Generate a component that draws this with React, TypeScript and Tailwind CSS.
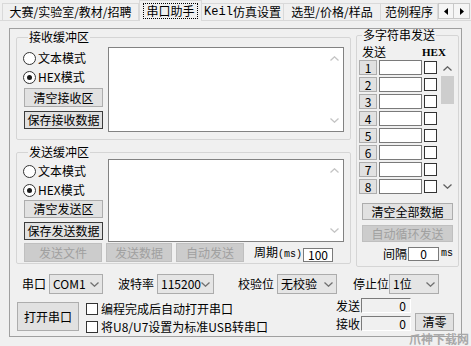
import React from "react";

const font = "font-['Noto_Sans_CJK_SC','Noto_Sans',sans-serif]";

function Chevron({ up = false, className = "" }: { up?: boolean; className?: string }) {
  return (
    <svg width="9" height="5" viewBox="0 0 9 5" className={className}>
      <path
        d={up ? "M0.5 4.5 L4.5 0.8 L8.5 4.5" : "M0.5 0.5 L4.5 4.2 L8.5 0.5"}
        fill="none"
        stroke="currentColor"
        strokeWidth="1.3"
      />
    </svg>
  );
}

function Btn({
  className = "",
  children,
  tone = "normal",
}: {
  className?: string;
  children: React.ReactNode;
  tone?: "normal" | "focus" | "disabled";
}) {
  const look =
    tone === "disabled"
      ? "bg-[#cccccc] border-[#bfbfbf] text-[#a0a0a0]"
      : tone === "focus"
        ? "bg-[#e1e1e1] border-[#3c3c3c] text-black"
        : "bg-[#e1e1e1] border-[#adadad] text-black";
  return (
    <button
      type="button"
      className={`flex shrink-0 items-center justify-center border text-[12px] leading-[14px] ${look} ${className}`}
    >
      {children}
    </button>
  );
}

function Radio({ label, checked = false, className = "" }: { label: string; checked?: boolean; className?: string }) {
  return (
    <div className={`flex h-[14px] items-center ${className}`}>
      <span className="flex h-[13px] w-[13px] items-center justify-center rounded-full border border-[#333333] bg-white">
        {checked && <span className="h-[5px] w-[5px] rounded-full bg-[#1a1a1a]" />}
      </span>
      <span className="ml-[2px] leading-[14px]">{label}</span>
    </div>
  );
}

function Check({ label, className = "" }: { label: string; className?: string }) {
  return (
    <div className={`flex h-[14px] items-center ${className}`}>
      <span className="h-[12px] w-[12px] border border-[#333333] bg-white" />
      <span className="ml-[3px] leading-[14px]">{label}</span>
    </div>
  );
}

function TextBox({ className = "" }: { className?: string }) {
  return (
    <div className={`flex justify-end border border-[#828282] bg-white ${className}`}>
      <div className="flex w-[17px] flex-col items-center justify-between py-[8px] text-[#c4c4c4]">
        <Chevron up />
        <Chevron />
      </div>
    </div>
  );
}

function Sel({ value, className = "" }: { value: string; className?: string }) {
  return (
    <div
      className={`flex h-[20px] items-center justify-between border border-[#acacac] bg-[#e5e5e5] pl-[3px] pr-[3px] ${className}`}
    >
      <span className="leading-[14px]">{value}</span>
      <Chevron className="text-[#707070]" />
    </div>
  );
}

function Counter({ label, className = "" }: { label: string; className?: string }) {
  return (
    <div className={`flex h-[15px] items-center ${className}`}>
      <span className="w-[24px] leading-[14px]">{label}</span>
      <div className="ml-[1px] flex h-[15px] w-[50px] items-center justify-end border-l border-t border-b border-r border-l-[#7a7a7a] border-t-[#7a7a7a] border-b-white border-r-white bg-[#f0f0f0] pr-[4px] leading-[13px]">
        0
      </div>
    </div>
  );
}

export default function App() {
  const rows = [1, 2, 3, 4, 5, 6, 7, 8];

  return (
    <div className={`relative h-[346px] w-[471px] overflow-hidden bg-[#f0f0f0] text-[12px] text-black ${font}`}>
      {/* tab strip */}
      <div className="flex h-[20px] items-end">
        <div className="ml-[2px] flex h-[17px] w-[137px] items-center justify-center border border-b-0 border-[#d9d9d9] leading-[14px]">
          大赛/实验室/教材/招聘
        </div>
        <div className="relative z-10 -mb-px flex h-[21px] w-[63px] items-start justify-center border border-b-0 border-[#d9d9d9] bg-[#f0f0f0] pt-[2px]">
          <span className="border border-dotted border-black px-[2px] leading-[14px]">串口助手</span>
        </div>
        <div className="flex h-[17px] w-[82px] items-center justify-center border border-b-0 border-l-0 border-[#d9d9d9] leading-[14px]">
          <span className="font-['Liberation_Mono',monospace]">Keil</span>仿真设置
        </div>
        <div className="flex h-[17px] w-[97px] items-center justify-center border border-b-0 border-l-0 border-[#d9d9d9] leading-[14px]">
          选型/价格/样品
        </div>
        <div className="flex h-[17px] w-[57px] items-center justify-center border border-b-0 border-l-0 border-[#d9d9d9] leading-[14px]">
          范例程序
        </div>
        <div className="mb-[1px] flex h-[16px]">
          <div className="flex w-[16px] items-center justify-center border border-[#c8c8c8] bg-[#f5f5f5]">
            <svg width="4" height="7" viewBox="0 0 4 7">
              <path d="M4 0 L0 3.5 L4 7 Z" fill="#000" />
            </svg>
          </div>
          <div className="flex w-[16px] items-center justify-center border border-l-0 border-[#c8c8c8] bg-[#f5f5f5]">
            <svg width="4" height="7" viewBox="0 0 4 7">
              <path d="M0 0 L4 3.5 L0 7 Z" fill="#000" />
            </svg>
          </div>
        </div>
      </div>

      {/* tab page */}
      <div className="h-[326px] border-t border-[#d9d9d9] pl-[9px] pt-[7px]">
        <div className="flex h-[309px] w-[453px] flex-col border border-[#a0a0a0]">
          {/* upper area */}
          <div className="flex items-start">
            <div className="ml-[6px] flex w-[335px] flex-col">
              {/* receive buffer */}
              <fieldset className="mt-[2px] h-[109px] w-[335px] rounded-[2px] border border-[#d5d5d5] pl-[6px] pr-[6px]">
                <legend className="ml-[5px] px-[1px] leading-[12px]">接收缓冲区</legend>
                <div className="flex">
                  <div className="flex w-[80px] flex-col">
                    <Radio label="文本模式" className="mt-[8px]" />
                    <Radio label="HEX模式" checked className="mt-[5px]" />
                    <Btn className="ml-[1px] mt-[4px] h-[19px] w-[79px]">清空接收区</Btn>
                    <Btn tone="focus" className="ml-[1px] mt-[4px] h-[18px] w-[79px]">
                      保存接收数据
                    </Btn>
                  </div>
                  <TextBox className="ml-[5px] mt-[4px] h-[85px] w-[236px]" />
                </div>
              </fieldset>

              {/* send buffer */}
              <fieldset className="mt-[6px] h-[118px] w-[335px] rounded-[2px] border border-[#d5d5d5] pl-[6px] pr-[6px]">
                <legend className="ml-[5px] px-[1px] leading-[12px]">发送缓冲区</legend>
                <div className="flex items-start">
                  <div className="flex w-[80px] flex-col">
                    <Radio label="文本模式" className="mt-[6px]" />
                    <Radio label="HEX模式" checked className="mt-[5px]" />
                    <Btn className="ml-[1px] mt-[3px] h-[18px] w-[79px]">清空发送区</Btn>
                    <Btn tone="focus" className="ml-[1px] mt-[4px] h-[18px] w-[79px]">
                      保存发送数据
                    </Btn>
                  </div>
                  <TextBox className="ml-[5px] mt-[1px] h-[83px] w-[236px]" />
                </div>
                <div className="mt-[1px] flex items-end">
                  <Btn tone="disabled" className="ml-[1px] h-[19px] w-[78px]">
                    发送文件
                  </Btn>
                  <Btn tone="disabled" className="ml-[4px] h-[19px] w-[66px]">
                    发送数据
                  </Btn>
                  <Btn tone="disabled" className="ml-[4px] h-[19px] w-[68px]">
                    自动发送
                  </Btn>
                  <span className="ml-[10px] whitespace-nowrap leading-[14px]">
                    周期<span className="font-['Liberation_Mono',monospace] text-[10px]">(ms)</span>
                  </span>
                  <div className="ml-[1px] flex h-[14px] w-[30px] items-center border border-[#7a7a7a] bg-white pl-[4px] leading-[12px]">
                    100
                  </div>
                </div>
              </fieldset>
            </div>

            {/* multi string send */}
            <fieldset className="ml-[5px] h-[238px] w-[103px] rounded-[2px] border border-[#d5d5d5]">
              <legend className="ml-[5px] px-[1px] leading-[12px]">多字符串发送</legend>
              <div className="mt-[5px] flex h-[12px] items-center">
                <span className="ml-[5px] leading-[12px]">发送</span>
                <span className="ml-[36px] font-['Liberation_Serif',serif] text-[11px] font-bold leading-[12px]">HEX</span>
              </div>
              <div className="mt-[2px] flex items-start">
                <div className="ml-[2px] flex flex-col gap-[2px]">
                  {rows.map((n) => (
                    <div key={n} className="flex h-[15px] items-center">
                      <Btn className="h-[15px] w-[18px]">{n}</Btn>
                      <div className="ml-[2px] h-[15px] w-[43px] border border-[#7a7a7a] bg-white" />
                      <div className="ml-[2px] h-[13px] w-[13px] border border-[#333333] bg-white" />
                    </div>
                  ))}
                </div>
                <div className="ml-[3px] flex h-[134px] w-[14px] flex-col items-center bg-[#f0f0f0] text-[#606060]">
                  <div className="flex h-[16px] items-center">
                    <Chevron up />
                  </div>
                  <div className="h-[28px] w-[13px] bg-[#cdcdcd]" />
                  <div className="flex-1" />
                  <div className="flex h-[16px] items-center">
                    <Chevron />
                  </div>
                </div>
              </div>
              <Btn className="ml-[5px] mt-[9px] h-[17px] w-[91px]">清空全部数据</Btn>
              <Btn tone="disabled" className="ml-[5px] mt-[5px] h-[17px] w-[91px]">
                自动循环发送
              </Btn>
              <div className="mt-[5px] flex h-[14px] items-center">
                <span className="ml-[26px] leading-[14px]">间隔</span>
                <div className="ml-[1px] flex h-[14px] w-[31px] items-center justify-center border border-[#7a7a7a] bg-white leading-[12px]">
                  0
                </div>
                <span className="ml-[2px] font-['Liberation_Mono',monospace] text-[10px] leading-[12px]">ms</span>
              </div>
            </fieldset>
          </div>

          {/* port settings */}
          <div className="mt-[7px] flex h-[20px] items-center">
            <span className="ml-[12px] leading-[14px]">串口</span>
            <Sel value="COM1" className="ml-[3px] w-[54px]" />
            <span className="ml-[15px] leading-[14px]">波特率</span>
            <Sel value="115200" className="ml-[3px] w-[57px]" />
            <span className="ml-[24px] leading-[14px]">校验位</span>
            <Sel value="无校验" className="ml-[3px] w-[60px]" />
            <span className="ml-[16px] leading-[14px]">停止位</span>
            <Sel value="1位" className="w-[50px]" />
          </div>

          <div className="mt-[4px] flex items-start">
            <Btn className="ml-[7px] mt-[4px] h-[29px] w-[62px]">打开串口</Btn>
            <div className="ml-[7px] mt-[4px] flex w-[250px] flex-col">
              <Check label="编程完成后自动打开串口" />
              <Check label="将U8/U7设置为标准USB转串口" className="mt-[4px]" />
            </div>
            <div className="flex flex-col">
              <Counter label="发送" />
              <Counter label="接收" className="mt-[3px]" />
            </div>
            <Btn className="ml-[4px] mt-[15px] h-[18px] w-[39px]">清零</Btn>
          </div>
        </div>
      </div>

      {/* watermark */}
      <div className="absolute bottom-[0px] right-[2px] text-[12px] font-bold leading-[15px] text-[#a8a8a8]">
        爪神下载网
      </div>
    </div>
  );
}
